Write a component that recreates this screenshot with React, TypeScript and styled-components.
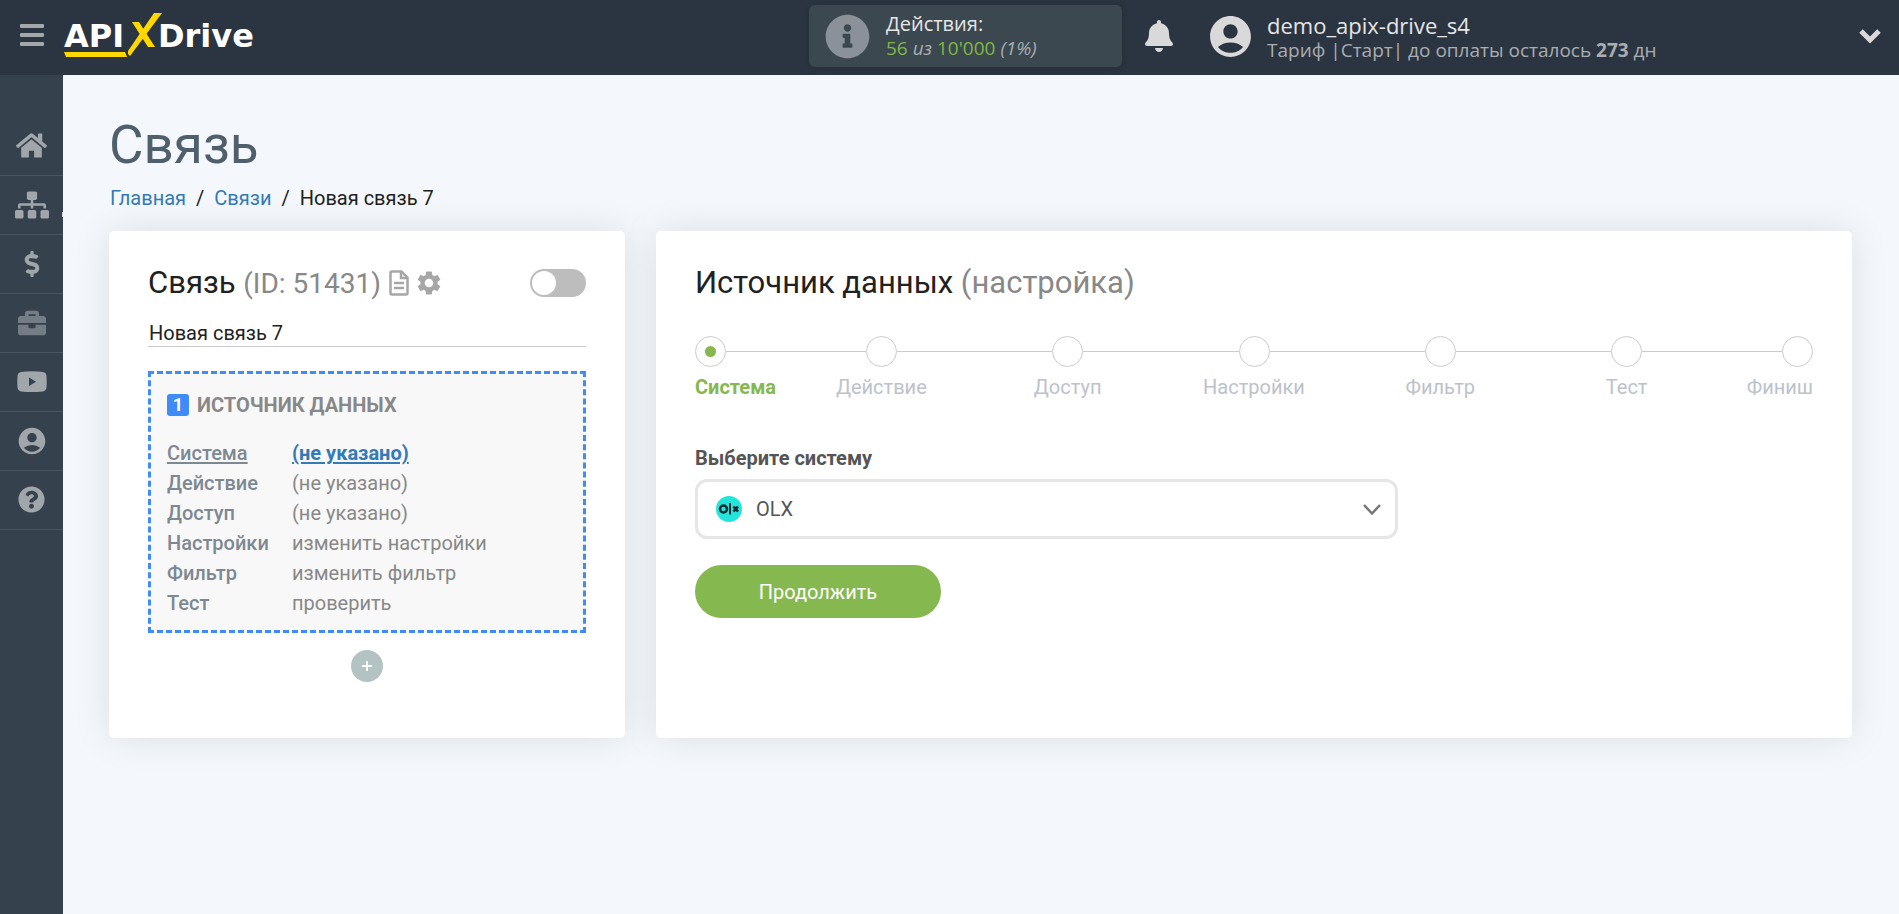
import React, { useState } from "react";
import styled, { createGlobalStyle, css } from "styled-components";
import {
  FaBell,
  FaBriefcase,
  FaDollarSign,
  FaHome,
  FaInfoCircle,
  FaQuestionCircle,
  FaSitemap,
} from "react-icons/fa";
import { MdAccountCircle } from "react-icons/md";

const GlobalStyle = createGlobalStyle`
  *, *::before, *::after { box-sizing: border-box; }
  body {
    margin: 0;
    background: #f4f8fd;
    color: #212121;
    font-family: Roboto, "Liberation Sans", sans-serif;
    font-size: 20px;
    line-height: 30px;
  }
  a { color: #337ab7; text-decoration: none; }
  button { font: inherit; cursor: pointer; }
  svg { display: block; }
`;

const Shell = styled.div`
  display: flex;
  flex-direction: column;
  min-height: 100vh;
`;

const TopBar = styled.header`
  display: flex;
  align-items: center;
  height: 75px;
  padding: 0 18px 3px 0;
  background: #2b3541;
  font-family: "Open Sans", "Noto Sans", sans-serif;
`;

const IconButton = styled.button`
  display: flex;
  align-items: center;
  justify-content: center;
  padding: 0;
  border: 0;
  background: none;
  color: #d9d9d9;
`;

const MenuButton = styled(IconButton)`
  width: 63px;
  height: 72px;
  padding-bottom: 3px;
  color: #a3a7ab;
`;

const LogoLink = styled.a`
  margin-right: auto;
`;

const LogoText = styled.text`
  font-family: "DejaVu Sans", Inter, sans-serif;
  font-weight: 700;
  font-size: 32px;
`;

const Actions = styled.section`
  display: flex;
  align-items: center;
  gap: 16px;
  width: 313px;
  height: 62px;
  padding-left: 16px;
  border-radius: 6px;
  background: #3b4850;
  box-shadow: 0 0 6px rgba(0, 0, 0, 0.15);
  color: #8a9198;
`;

const Lines = styled.div`
  display: flex;
  flex-direction: column;
  font-size: 19px;
  line-height: 25px;
  white-space: nowrap;
  color: #a9adb2;
`;

const AccountLines = styled(Lines)`
  margin-top: 4px;
`;

const LineTitle = styled.span`
  font-size: 20px;
  color: #e6e6e6;
`;

const AccountName = styled(LineTitle)`
  font-size: 22px;
`;

const Count = styled.span`
  color: #7fb843;
`;

const BellButton = styled(IconButton)`
  width: 73px;
  height: 62px;
`;

const Account = styled.section`
  display: flex;
  align-items: center;
  flex: 0 1 686px;
  gap: 12px;
  padding-left: 11px;
  color: #d9d9d9;
`;

const ExpandButton = styled(IconButton)`
  margin-left: auto;
`;

const Body = styled.div`
  display: flex;
  flex: 1;
`;

const SideNav = styled.nav`
  width: 63px;
  padding-top: 42px;
  background: #36414e;
  overflow: hidden;
`;

const NavItem = styled.a<{ $muted?: boolean }>`
  position: relative;
  display: flex;
  align-items: center;
  justify-content: center;
  height: 59px;
  padding-bottom: 1px;
  border-bottom: 1px solid #4b5661;
  color: ${(p) => (p.$muted ? "#747c85" : "#a1a6aa")};
`;

const NavMarker = styled.span`
  position: absolute;
  right: 0;
  bottom: 17px;
  width: 1px;
  height: 5px;
  background: #d5d8db;
`;

const Content = styled.main`
  flex: 1;
  min-width: 0;
  padding: 40px 47px 40px 46px;
`;

const PageTitle = styled.h1`
  margin: 0;
  font-size: 53px;
  line-height: 60px;
  font-weight: 400;
  color: #4f5f6b;
`;

const Breadcrumbs = styled.nav`
  display: flex;
  gap: 10px;
  margin: 8px 0 18px 1px;
`;

const Columns = styled.div`
  display: grid;
  grid-template-columns: minmax(440px, 516fr) minmax(0, 1196fr);
  gap: 31px;
`;

const Card = styled.section`
  min-height: 507px;
  padding: 32px 39px;
  border-radius: 5px;
  background: #fff;
  box-shadow: 0 0 38px rgba(0, 0, 0, 0.1);
`;

const CardHead = styled.header`
  display: flex;
  align-items: center;
  height: 40px;
  gap: 8px;
`;

const CardTitle = styled.h2`
  margin: 0;
  font-size: 31px;
  line-height: 40px;
  font-weight: 400;
  white-space: nowrap;
  color: #212121;
`;

const Dim = styled.span`
  color: #888;
`;

const LinkId = styled(Dim)`
  font-size: 28px;
`;

const HeadIcon = styled(IconButton)`
  color: #a6a6a6;
`;

const Toggle = styled.input`
  appearance: none;
  width: 56px;
  height: 28px;
  margin: 0 0 0 auto;
  padding: 2px;
  border-radius: 14px;
  background: #bdbdbd;
  cursor: pointer;

  &::before {
    content: "";
    display: block;
    width: 24px;
    height: 24px;
    border-radius: 50%;
    background: #fff;
  }
  &:checked {
    background: #85b84f;
  }
  &:checked::before {
    margin-left: auto;
  }
`;

const NameInput = styled.input`
  display: block;
  width: 100%;
  height: 28px;
  margin: 16px 0 24px;
  padding: 0 1px;
  border: 0;
  border-bottom: 1px solid #ccc;
  outline: 0;
  background: none;
  font: inherit;
  color: #212121;
`;

const SourceBox = styled.section`
  min-height: 262px;
  padding: 16px 16px 12px;
  border: 3px dashed #3f8cf8;
  background: #f8f8f8;
`;

const SourceTitle = styled.h3`
  display: flex;
  align-items: center;
  gap: 8px;
  margin: 0 0 18px;
  font-size: 20px;
  line-height: 30px;
  font-weight: 700;
  text-transform: uppercase;
  color: #888;
`;

const Badge = styled.span`
  width: 22px;
  height: 22px;
  border-radius: 3px;
  background: #3f8cf8;
  color: #fff;
  font-size: 18px;
  line-height: 22px;
  text-align: center;
`;

const SourceTable = styled.table`
  border-collapse: collapse;
  line-height: 30px;
`;

const SourceKey = styled.th<{ $active?: boolean }>`
  width: 125px;
  padding: 0;
  text-align: left;
  font-weight: 500;
  color: #7d8893;
  text-decoration: ${(p) => (p.$active ? "underline" : "none")};
  text-decoration-thickness: 2px;
  text-underline-offset: 2px;
`;

const SourceValue = styled.td`
  padding: 0;
`;

const SourceLink = styled.a<{ $active?: boolean }>`
  color: #888;
  ${(p) =>
    p.$active &&
    css`
      color: #337ab7;
      font-weight: 700;
      text-decoration: underline;
      text-decoration-thickness: 2px;
      text-underline-offset: 2px;
    `}
`;

const AddButton = styled(IconButton)`
  width: 32px;
  height: 32px;
  margin: 17px auto 0;
  border-radius: 50%;
  background: #b3c2c3;
  color: #fff;
`;

const Steps = styled.ol`
  display: flex;
  margin: 33px 0 0;
  padding: 0;
  list-style: none;
`;

const Step = styled.li<{ $edge?: "first" | "last" }>`
  display: flex;
  flex-direction: column;
  flex: ${(p) => (p.$edge ? 1 : 2)} 1 0;
  min-width: 0;
  align-items: ${(p) =>
    p.$edge === "first" ? "flex-start" : p.$edge === "last" ? "flex-end" : "center"};
`;

const StepTrack = styled.span<{ $edge?: "first" | "last" }>`
  display: flex;
  align-items: center;
  width: 100%;

  &::before,
  &::after {
    content: "";
    flex: 1;
    height: 1px;
    background: #ccc;
  }
  &::before {
    display: ${(p) => (p.$edge === "first" ? "none" : "block")};
  }
  &::after {
    display: ${(p) => (p.$edge === "last" ? "none" : "block")};
  }
`;

const StepDot = styled.span<{ $active?: boolean }>`
  display: flex;
  align-items: center;
  justify-content: center;
  width: 31px;
  height: 31px;
  border: 1px solid #ccc;
  border-radius: 50%;

  &::before {
    content: "";
    width: 11px;
    height: 11px;
    border-radius: 50%;
    background: ${(p) => (p.$active ? "#85b84f" : "transparent")};
  }
`;

const StepLabel = styled.span<{ $active?: boolean }>`
  margin-top: 5px;
  white-space: nowrap;
  font-weight: ${(p) => (p.$active ? 700 : 400)};
  color: ${(p) => (p.$active ? "#85b84f" : "#bcc2cb")};
`;

const FieldLabel = styled.label`
  display: block;
  margin-top: 41px;
  font-weight: 700;
  color: #555;
`;

const SelectWrap = styled.div`
  position: relative;
  max-width: 703px;
  margin-top: 6px;
  color: #777;
`;

const SystemSelect = styled.select`
  appearance: none;
  display: block;
  width: 100%;
  height: 60px;
  padding: 0 60px 0 58px;
  border: 3px solid #e6e6e6;
  border-radius: 12px;
  background: #fff;
  font: inherit;
  color: #555;
`;

const SystemIcon = styled.svg`
  position: absolute;
  top: 17px;
  left: 21px;
  pointer-events: none;
`;

const SelectArrow = styled.svg`
  position: absolute;
  top: 24px;
  right: 16px;
  pointer-events: none;
`;

const SubmitButton = styled.button`
  display: block;
  min-width: 246px;
  height: 53px;
  margin-top: 26px;
  border: 0;
  border-radius: 27px;
  background: #85b84f;
  color: #fff;
`;

const steps = ["Система", "Действие", "Доступ", "Настройки", "Фильтр", "Тест", "Финиш"];

const sourceRows = [
  ["Система", "(не указано)"],
  ["Действие", "(не указано)"],
  ["Доступ", "(не указано)"],
  ["Настройки", "изменить настройки"],
  ["Фильтр", "изменить фильтр"],
  ["Тест", "проверить"],
];

const YoutubeIcon = () => (
  <svg width="30" height="22" viewBox="0 0 30 22" fill="currentColor">
    <path
      fillRule="evenodd"
      d="M4 1Q15-.6 26 1Q29 1.400 29.400 4Q30 11 29.400 17Q29 20 26 20.400Q15 21.800 4 20.400Q1 20 .6 17Q0 11 .6 4Q1 1.400 4 1ZM12 6.500V15L19 10.700Z"
    />
  </svg>
);

const navItems = [
  { label: "Главная", icon: <FaHome size={31} /> },
  { label: "Связи", icon: <FaSitemap size={34} />, marker: true },
  { label: "Оплата", icon: <FaDollarSign size={26} /> },
  { label: "Бизнес", icon: <FaBriefcase size={28} />, muted: true },
  { label: "Видео", icon: <YoutubeIcon /> },
  { label: "Профиль", icon: <MdAccountCircle size={32} /> },
  { label: "Помощь", icon: <FaQuestionCircle size={27} /> },
];

const Logo = () => (
  <svg width="192" height="48" viewBox="0 0 192 48" role="img" aria-label="APIXDrive">
    <LogoText x="1" y="35" fill="#fff">API</LogoText>
    <LogoText x="95" y="35" fill="#fff">Drive</LogoText>
    <g fill="#ffd800">
      <path d="M1 40H62L64 45H3Z" />
      <path d="M91 1H99L67 44L65 42V39Z" />
      <path d="M69 10H76L92 35H85Z" />
    </g>
  </svg>
);

export default function App() {
  const [enabled, setEnabled] = useState(false);
  const [name, setName] = useState("Новая связь 7");

  return (
    <Shell>
      <GlobalStyle />
      <TopBar>
        <MenuButton aria-label="Меню">
          <svg width="24" height="22" viewBox="0 0 24 22" fill="currentColor">
            <rect width="24" height="4" rx="1" />
            <rect y="9" width="24" height="4" rx="1" />
            <rect y="18" width="24" height="4" rx="1" />
          </svg>
        </MenuButton>
        <LogoLink href="#" aria-label="APIXDrive">
          <Logo />
        </LogoLink>
        <Actions>
          <FaInfoCircle size={45} />
          <Lines>
            <LineTitle>Действия:</LineTitle>
            <span>
              <Count>56</Count> <em>из</em> <Count>10'000</Count> <em>(1%)</em>
            </span>
          </Lines>
        </Actions>
        <BellButton aria-label="Уведомления">
          <FaBell size={32} />
        </BellButton>
        <Account>
          <MdAccountCircle size={49} />
          <AccountLines>
            <AccountName>demo_apix-drive_s4</AccountName>
            <span>
              Тариф |Старт| до оплаты осталось <b>273</b> дн
            </span>
          </AccountLines>
          <ExpandButton aria-label="Развернуть">
            <svg width="22" height="16" viewBox="0 0 22 16" fill="none" stroke="currentColor" strokeWidth="5">
              <path d="M2 3L11 12L20 3" />
            </svg>
          </ExpandButton>
        </Account>
      </TopBar>
      <Body>
        <SideNav>
          {navItems.map((item) => (
            <NavItem key={item.label} href="#" aria-label={item.label} $muted={item.muted}>
              {item.icon}
              {item.marker && <NavMarker />}
            </NavItem>
          ))}
        </SideNav>
        <Content>
          <PageTitle>Связь</PageTitle>
          <Breadcrumbs>
            <a href="#">Главная</a>
            <span>/</span>
            <a href="#">Связи</a>
            <span>/</span>
            <span>Новая связь 7</span>
          </Breadcrumbs>
          <Columns>
            <Card>
              <CardHead>
                <CardTitle>
                  Связь <LinkId>(ID: 51431)</LinkId>
                </CardTitle>
                <HeadIcon aria-label="Журнал">
                  <svg width="20" height="26" viewBox="0 0 20 26" fill="none" stroke="currentColor" strokeWidth="2.500">
                    <path d="M3 1.500H12.500L18.500 7.500V23Q18.500 24.500 17 24.500H3Q1.500 24.500 1.500 23V3Q1.500 1.500 3 1.500Z" />
                    <path d="M12 2V8H18M5 13H15M5 18H15" />
                  </svg>
                </HeadIcon>
                <HeadIcon aria-label="Настройки">
                  <svg width="24" height="26" viewBox="2 1.500 20 21" fill="currentColor">
                    <path d="M19.140 12.940c.04-.3.060-.61.060-.94 0-.32-.02-.64-.07-.94l2.030-1.580a.49.49 0 0 0 .12-.61l-1.920-3.320a.488.488 0 0 0-.59-.22l-2.390.96c-.5-.38-1.030-.7-1.620-.94l-.36-2.540a.484.484 0 0 0-.48-.41h-3.840c-.24 0-.43.170-.47.410l-.36 2.540c-.59.240-1.130.570-1.620.94l-2.390-.96c-.22-.08-.47 0-.59.220L2.740 8.870c-.12.210-.08.470.12.610l2.030 1.580c-.05.3-.09.630-.09.940s.02.640.070.940l-2.030 1.580a.49.49 0 0 0-.12.610l1.920 3.320c.12.220.370.290.590.220l2.390-.96c.5.380 1.030.7 1.620.94l.36 2.540c.05.240.240.410.480.410h3.840c.24 0 .44-.17.470-.41l.36-2.540c.59-.24 1.130-.56 1.620-.94l2.390.96c.22.080.470 0 .59-.22l1.920-3.320c.12-.22.070-.47-.12-.61l-2.010-1.580zM12 15.600c-1.980 0-3.600-1.620-3.600-3.600s1.620-3.600 3.600-3.600 3.600 1.620 3.600 3.600-1.620 3.600-3.600 3.600z" />
                  </svg>
                </HeadIcon>
                <Toggle
                  type="checkbox"
                  role="switch"
                  aria-label="Включить связь"
                  checked={enabled}
                  onChange={(e) => setEnabled(e.target.checked)}
                />
              </CardHead>
              <NameInput aria-label="Название связи" value={name} onChange={(e) => setName(e.target.value)} />
              <SourceBox>
                <SourceTitle>
                  <Badge>1</Badge>
                  Источник данных
                </SourceTitle>
                <SourceTable>
                  <tbody>
                    {sourceRows.map(([key, value], i) => (
                      <tr key={key}>
                        <SourceKey scope="row" $active={i === 0}>{key}</SourceKey>
                        <SourceValue>
                          <SourceLink href="#" $active={i === 0}>{value}</SourceLink>
                        </SourceValue>
                      </tr>
                    ))}
                  </tbody>
                </SourceTable>
              </SourceBox>
              <AddButton aria-label="Добавить">
                <svg width="10" height="10" viewBox="0 0 10 10" stroke="currentColor" strokeWidth="2">
                  <path d="M5 0V10M0 5H10" />
                </svg>
              </AddButton>
            </Card>
            <Card>
              <CardHead>
                <CardTitle>
                  Источник данных <Dim>(настройка)</Dim>
                </CardTitle>
              </CardHead>
              <Steps>
                {steps.map((step, i) => {
                  const edge = i === 0 ? "first" : i === steps.length - 1 ? "last" : undefined;
                  return (
                    <Step key={step} $edge={edge}>
                      <StepTrack $edge={edge}>
                        <StepDot $active={i === 0} />
                      </StepTrack>
                      <StepLabel $active={i === 0}>{step}</StepLabel>
                    </Step>
                  );
                })}
              </Steps>
              <FieldLabel htmlFor="system">Выберите систему</FieldLabel>
              <SelectWrap>
                <SystemSelect id="system" defaultValue="olx">
                  <option value="olx">OLX</option>
                </SystemSelect>
                <SystemIcon width="26" height="26" viewBox="0 0 26 26" fill="none" stroke="#0b2a33">
                  <circle cx="13" cy="13" r="13" fill="#23e5db" stroke="none" />
                  <circle cx="7.500" cy="13" r="3.500" strokeWidth="2.500" />
                  <path strokeWidth="2" d="M14 7V18.500" />
                  <path strokeWidth="2.600" d="M17.500 10.500L22 15.500M22 10.500L17.500 15.500" />
                </SystemIcon>
                <SelectArrow width="20" height="13" viewBox="0 0 20 13" fill="none" stroke="currentColor" strokeWidth="2.500">
                  <path d="M2 2L10 10.500L18 2" />
                </SelectArrow>
              </SelectWrap>
              <SubmitButton>Продолжить</SubmitButton>
            </Card>
          </Columns>
        </Content>
      </Body>
    </Shell>
  );
}
